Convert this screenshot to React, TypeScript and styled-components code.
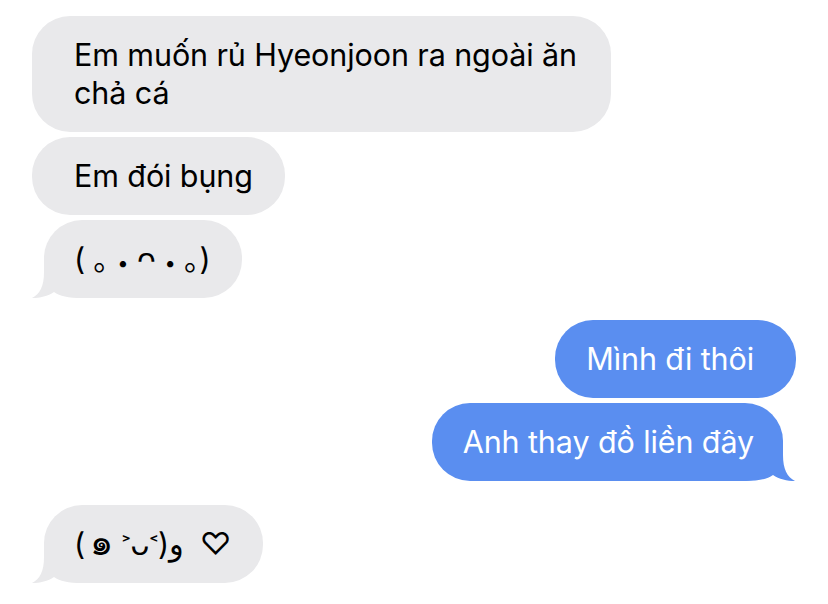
import React from 'react'
import styled, { createGlobalStyle, css } from 'styled-components'

const GlobalStyle = createGlobalStyle`
  html, body {
    margin: 0;
    padding: 0;
    background: #ffffff;
  }
  body {
    font-family: Inter, "Noto Sans", "DejaVu Sans", "Noto Sans CJK JP", sans-serif;
  }
`

type Side = 'in' | 'out'

type Message = {
  text: React.ReactNode,
  side: Side,
  tail?: boolean,
  gapBefore?: number
}

// glyphs inside the kaomoji that need another size
const Glyph = styled.span<{ $scale: number, $raise?: number }>`
  font-size: ${p => p.$scale}em;
  line-height: 0;
  vertical-align: ${p => p.$raise ? `${p.$raise}em` : 'baseline'};
`

const messages: Message[] = [
  { text: 'Em muốn rủ Hyeonjoon ra ngoài ăn chả cá', side: 'in' },
  { text: 'Em đói bụng', side: 'in' },
  {
    text: <>( ｡ <Glyph $scale={0.66}>•</Glyph> ᴖ <Glyph $scale={0.66}>•</Glyph> ｡)</>,
    side: 'in',
    tail: true
  },
  { text: 'Mình đi thôi', side: 'out', gapBefore: 17 },
  { text: 'Anh thay đồ liền đây', side: 'out', tail: true },
  {
    text: (
      <>
        ({'\u2009'}<Glyph $scale={1.2}>๑</Glyph> <Glyph $scale={0.62} $raise={0.42}>˃</Glyph>ᴗ
        <Glyph $scale={0.62} $raise={0.42}>˂</Glyph>)و{'\u2005'} ♡
      </>
    ),
    side: 'in',
    tail: true,
    gapBefore: 19
  },
]

const palette = {
  in: { bg: '#e9e9eb', fg: '#000000' },
  out: { bg: '#5a8ef0', fg: '#ffffff' },
}

const Tail = ({ side }: { side: Side }) => (
  <TailSvg $side={side} viewBox='0 0 50 40' width='50' height='40'>
    <path
      d='M12 2 L12 14 C12 28 8 36 0 40 C8 40 16 38 22 34 C28 38 36 40 50 40 L50 2 Z'
      fill={palette[side].bg}
    />
  </TailSvg>
)

export default function App() {
  return (
    <>
      <GlobalStyle />
      <Thread>
        {messages.map((m, i) => (
          <Row key={i} $side={m.side} $gap={m.gapBefore ?? 0}>
            <Bubble $side={m.side} $tail={!!m.tail}>
              {m.text}
              {m.tail && <Tail side={m.side} />}
            </Bubble>
          </Row>
        ))}
      </Thread>
    </>
  )
}

const Thread = styled.div`
  display: flex;
  flex-direction: column;
  gap: 5px;
  padding: 16px 32px;
  width: 828px;
  box-sizing: border-box;
`

const Row = styled.div<{ $side: Side, $gap: number }>`
  display: flex;
  justify-content: ${p => p.$side === 'in' ? 'flex-start' : 'flex-end'};
  margin-top: ${p => p.$gap}px;
`

const Bubble = styled.div<{ $side: Side, $tail: boolean }>`
  position: relative;
  isolation: isolate;
  max-width: 505px;
  height: ${p => p.$tail ? '38px' : 'auto'};
  padding: 20px 0;
  border-radius: 38px;
  font-size: 30.5px;
  line-height: 38px;
  letter-spacing: -0.1px;
  background: ${p => palette[p.$side].bg};
  color: ${p => palette[p.$side].fg};
  ${p => p.$side === 'in'
    ? css`
      padding-left: ${p.$tail ? '30px' : '42px'};
      padding-right: 32px;
      margin-left: ${p.$tail ? '12px' : '0'};
    `
    : css`
      padding-left: 31px;
      padding-right: ${p.$tail ? '29px' : '42px'};
      margin-right: ${p.$tail ? '13px' : '0'};
    `}
`

const TailSvg = styled.svg<{ $side: Side }>`
  position: absolute;
  bottom: 0;
  z-index: -1;
  ${p => p.$side === 'in'
    ? css`left: -12px;`
    : css`right: -12px; transform: scaleX(-1);`}
`
